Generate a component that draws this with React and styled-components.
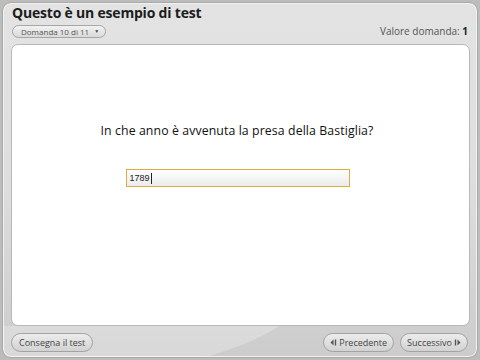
import React from "react";
import styled, { createGlobalStyle } from "styled-components";

const Global = createGlobalStyle`
  html, body { margin: 0; padding: 0; background: #bcbcbc; }
  body { font-family: "Open Sans", "Liberation Sans", sans-serif; }
`;

const Frame = styled.div`
  box-sizing: border-box;
  width: 476px;
  height: 356px;
  margin: 2px 0 0 2px;
  border-radius: 9px;
  border: 1px solid #a9a9a9;
  box-shadow: inset 0 0 0 1px #f2f2f2;
  background: linear-gradient(180deg, #e3e3e3 0%, #dedede 50%, #cccccc 100%);
  display: flex;
  flex-direction: column;
  overflow: hidden;
`;

const Header = styled.header`
  padding: 1px 8px 0 9px;
  display: flex;
  flex-direction: column;
  gap: 3px;
`;

const Title = styled.h1`
  margin: 0;
  font-family: "Open Sans", "Liberation Sans", sans-serif;
  font-weight: 700;
  font-size: 14px;
  line-height: 17px;
  color: #1c1c1c;
  letter-spacing: -0.2px;
`;

const SubRow = styled.div`
  display: flex;
  justify-content: space-between;
  align-items: center;
`;

const Pill = styled.button`
  box-sizing: border-box;
  height: 13px;
  padding: 0 6px 0 8px;
  border-radius: 7px;
  border: 1px solid #a6a6a6;
  background: linear-gradient(180deg, #f2f2f2, #d9d9d9);
  font-family: "Open Sans", "Liberation Sans", sans-serif;
  font-size: 8px;
  line-height: 11px;
  color: #555;
  display: flex;
  align-items: center;
  gap: 5px;
`;

const Caret = styled.span`
  font-size: 5px;
  color: #444;
`;

const Value = styled.div`
  font-size: 10px;
  color: #555;
  padding-right: 1px;
  b { color: #222; font-weight: 700; }
`;

const Panel = styled.main`
  box-sizing: border-box;
  margin: 6px 7px 0 8px;
  height: 282px;
  background: #fff;
  border: 1px solid #b8b8b8;
  border-radius: 7px;
  display: flex;
  flex-direction: column;
  align-items: center;
  padding-top: 77px;
`;

const Question = styled.p`
  margin: 0 0 0 -7px;
  font-family: "Open Sans", "Liberation Sans", sans-serif;
  font-size: 12.3px;
  color: #111;
  letter-spacing: 0.1px;
`;

const AnswerBox = styled.div`
  box-sizing: border-box;
  margin-top: 30px;
  margin-left: -6px;
  width: 224px;
  height: 18px;
  border: 1px solid #dcae42;
  background: linear-gradient(180deg, #ffffff, #ebebeb);
  display: flex;
  align-items: center;
  padding-left: 3px;
  font-family: "Liberation Sans", sans-serif;
  font-size: 9px;
  color: #222;
`;

const Cursor = styled.span`
  display: inline-block;
  width: 1px;
  height: 11px;
  background: #222;
  margin-left: 1px;
`;

const Footer = styled.footer`
  flex: 1;
  display: flex;
  justify-content: space-between;
  align-items: flex-start;
  padding: 7px 9px 0 8px;
  position: relative;
  overflow: hidden;
`;

const Swoosh = styled.div`
  position: absolute;
  left: -40px;
  top: -40px;
  width: 345px;
  height: 100px;
  border-radius: 0 0 100% 0 / 0 0 100% 0;
  background: rgba(255, 255, 255, 0.25);
  pointer-events: none;
`;

const Btn = styled.button`
  position: relative;
  box-sizing: border-box;
  height: 19px;
  padding: 0 ${(p) => p.$pad || 7}px;
  border-radius: 10px;
  border: 1px solid #a3a3a3;
  background: linear-gradient(180deg, #ececec, #d2d2d2);
  font-family: "Open Sans", "Liberation Sans", sans-serif;
  font-size: 9px;
  color: #444;
  display: flex;
  align-items: center;
  gap: 2px;
`;

const Group = styled.div`
  display: flex;
  gap: 6px;
`;

const Arrow = ({ dir }) => (
  <svg width="7" height="7" viewBox="0 0 7 7">
    {dir === "left" ? (
      <>
        <path d="M3.5 0.5 L0.5 3.5 L3.5 6.5 Z" fill="#555" />
        <rect x="4.8" y="0.5" width="1.4" height="6" fill="#555" />
      </>
    ) : (
      <>
        <rect x="0.8" y="0.5" width="1.4" height="6" fill="#555" />
        <path d="M3.5 0.5 L6.5 3.5 L3.5 6.5 Z" fill="#555" />
      </>
    )}
  </svg>
);

export default function App() {
  return (
    <>
      <Global />
      <Frame>
        <Header>
          <Title>Questo è un esempio di test</Title>
          <SubRow>
            <Pill>
              Domanda 10 di 11 <Caret>▼</Caret>
            </Pill>
            <Value>
              Valore domanda: <b>1</b>
            </Value>
          </SubRow>
        </Header>
        <Panel>
          <Question>In che anno è avvenuta la presa della Bastiglia?</Question>
          <AnswerBox>
            1789
            <Cursor />
          </AnswerBox>
        </Panel>
        <Footer>
          <Swoosh />
          <Btn>Consegna il test</Btn>
          <Group>
            <Btn $pad={6}>
              <Arrow dir="left" />
              Precedente
            </Btn>
            <Btn $pad={6}>
              Successivo
              <Arrow dir="right" />
            </Btn>
          </Group>
        </Footer>
      </Frame>
    </>
  );
}
